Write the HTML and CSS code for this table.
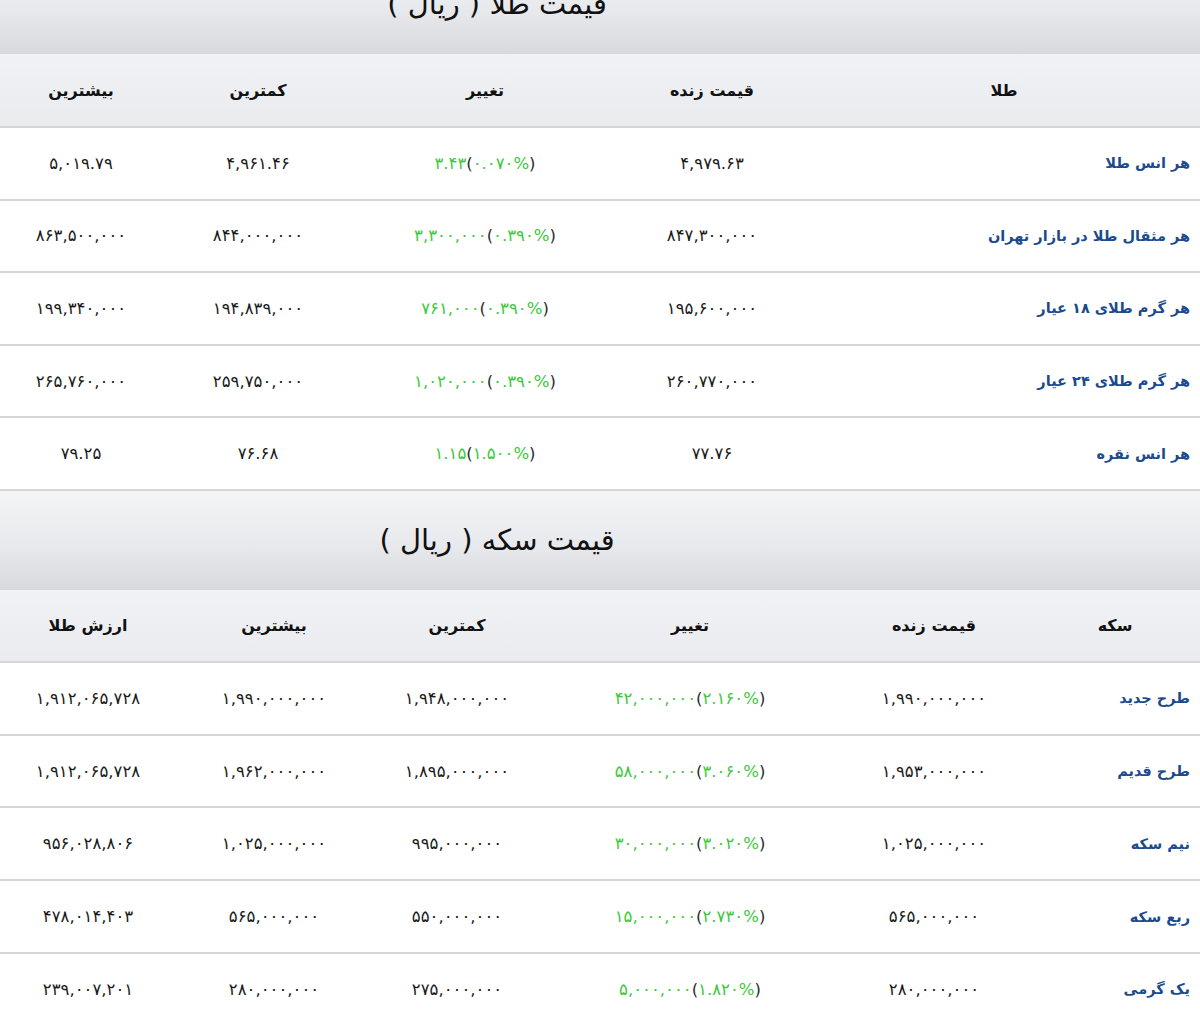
FILE: index.html
```html
<!DOCTYPE html>
<html lang="fa" dir="rtl">
<head>
<meta charset="utf-8">
<title>قیمت طلا و سکه</title>
<link rel="stylesheet" href="styles.css">
</head>
<body>
<section class="board gold">
  <div class="title-bar first"><h2 class="title">قیمت طلا ( ریال )</h2></div>
  <div class="row head">
    <div>طلا</div><div>قیمت زنده</div><div>تغییر</div><div>کمترین</div><div>بیشترین</div>
  </div>
  <div class="row">
    <div class="name">هر انس طلا</div><div>۴,۹۷۹.۶۳</div>
    <div><span class="chg" dir="ltr"><span class="up">۳.۴۳</span>(<span class="up">۰.۰۷۰%</span>)</span></div>
    <div>۴,۹۶۱.۴۶</div><div>۵,۰۱۹.۷۹</div>
  </div>
  <div class="row">
    <div class="name">هر مثقال طلا در بازار تهران</div><div>۸۴۷,۳۰۰,۰۰۰</div>
    <div><span class="chg" dir="ltr"><span class="up">۳,۳۰۰,۰۰۰</span>(<span class="up">۰.۳۹۰%</span>)</span></div>
    <div>۸۴۴,۰۰۰,۰۰۰</div><div>۸۶۳,۵۰۰,۰۰۰</div>
  </div>
  <div class="row">
    <div class="name">هر گرم طلای ۱۸ عیار</div><div>۱۹۵,۶۰۰,۰۰۰</div>
    <div><span class="chg" dir="ltr"><span class="up">۷۶۱,۰۰۰</span>(<span class="up">۰.۳۹۰%</span>)</span></div>
    <div>۱۹۴,۸۳۹,۰۰۰</div><div>۱۹۹,۳۴۰,۰۰۰</div>
  </div>
  <div class="row">
    <div class="name">هر گرم طلای ۲۴ عیار</div><div>۲۶۰,۷۷۰,۰۰۰</div>
    <div><span class="chg" dir="ltr"><span class="up">۱,۰۲۰,۰۰۰</span>(<span class="up">۰.۳۹۰%</span>)</span></div>
    <div>۲۵۹,۷۵۰,۰۰۰</div><div>۲۶۵,۷۶۰,۰۰۰</div>
  </div>
  <div class="row">
    <div class="name">هر انس نقره</div><div>۷۷.۷۶</div>
    <div><span class="chg" dir="ltr"><span class="up">۱.۱۵</span>(<span class="up">۱.۵۰۰%</span>)</span></div>
    <div>۷۶.۶۸</div><div>۷۹.۲۵</div>
  </div>
</section>

<section class="board coin">
  <div class="title-bar"><h2 class="title">قیمت سکه ( ریال )</h2></div>
  <div class="row head">
    <div>سکه</div><div>قیمت زنده</div><div>تغییر</div><div>کمترین</div><div>بیشترین</div><div>ارزش طلا</div>
  </div>
  <div class="row">
    <div class="name">طرح جدید</div><div>۱,۹۹۰,۰۰۰,۰۰۰</div>
    <div><span class="chg" dir="ltr"><span class="up">۴۲,۰۰۰,۰۰۰</span>(<span class="up">۲.۱۶۰%</span>)</span></div>
    <div>۱,۹۴۸,۰۰۰,۰۰۰</div><div>۱,۹۹۰,۰۰۰,۰۰۰</div><div>۱,۹۱۲,۰۶۵,۷۲۸</div>
  </div>
  <div class="row">
    <div class="name">طرح قدیم</div><div>۱,۹۵۳,۰۰۰,۰۰۰</div>
    <div><span class="chg" dir="ltr"><span class="up">۵۸,۰۰۰,۰۰۰</span>(<span class="up">۳.۰۶۰%</span>)</span></div>
    <div>۱,۸۹۵,۰۰۰,۰۰۰</div><div>۱,۹۶۲,۰۰۰,۰۰۰</div><div>۱,۹۱۲,۰۶۵,۷۲۸</div>
  </div>
  <div class="row">
    <div class="name">نیم سکه</div><div>۱,۰۲۵,۰۰۰,۰۰۰</div>
    <div><span class="chg" dir="ltr"><span class="up">۳۰,۰۰۰,۰۰۰</span>(<span class="up">۳.۰۲۰%</span>)</span></div>
    <div>۹۹۵,۰۰۰,۰۰۰</div><div>۱,۰۲۵,۰۰۰,۰۰۰</div><div>۹۵۶,۰۲۸,۸۰۶</div>
  </div>
  <div class="row">
    <div class="name">ربع سکه</div><div>۵۶۵,۰۰۰,۰۰۰</div>
    <div><span class="chg" dir="ltr"><span class="up">۱۵,۰۰۰,۰۰۰</span>(<span class="up">۲.۷۳۰%</span>)</span></div>
    <div>۵۵۰,۰۰۰,۰۰۰</div><div>۵۶۵,۰۰۰,۰۰۰</div><div>۴۷۸,۰۱۴,۴۰۳</div>
  </div>
  <div class="row">
    <div class="name">یک گرمی</div><div>۲۸۰,۰۰۰,۰۰۰</div>
    <div><span class="chg" dir="ltr"><span class="up">۵,۰۰۰,۰۰۰</span>(<span class="up">۱.۸۲۰%</span>)</span></div>
    <div>۲۷۵,۰۰۰,۰۰۰</div><div>۲۸۰,۰۰۰,۰۰۰</div><div>۲۳۹,۰۰۷,۲۰۱</div>
  </div>
</section>
</body>
</html>
```
FILE: styles.css
```css
html, body {
  margin: 0;
  padding: 0;
  background: #ffffff;
}
body {
  font-family: "DejaVu Sans", "Noto Sans", sans-serif;
  color: #222222;
  overflow: hidden;
}
.board {
  width: 1200px;
}
.title-bar {
  height: 99px;
  box-sizing: border-box;
  background: linear-gradient(to bottom, #f4f5f7 0%, #e8e9ec 55%, #d8d9dc 100%);
  display: flex;
  align-items: center;
  justify-content: center;
  padding-right: 206px;
}
.title-bar.first {
  margin-top: -45px;
}
.title {
  margin: 0;
  font-size: 29px;
  font-weight: normal;
  color: #111111;
  line-height: 1;
}
.row {
  display: grid;
  align-items: center;
  height: 72.6px;
  box-sizing: border-box;
  border-bottom: 2px solid #d6d6d6;
  font-size: 16.5px;
  text-align: center;
  color: #1a1a1a;
}
.gold .row {
  grid-template-columns: 392px 192px 262px 192px 162px;
}
.coin .row {
  grid-template-columns: 170px 192px 296px 170px 196px 176px;
  height: 72.75px;
}
.row.head {
  height: 74px;
  background: linear-gradient(to bottom, #f1f2f5 0%, #eaebef 100%);
  font-weight: bold;
  font-size: 16px;
  color: #111111;
}
.coin .row.head {
  height: 73px;
}
.name {
  text-align: right;
  padding-right: 10px;
  font-weight: bold;
  font-size: 14.5px;
  color: #1b4b8c;
}
.chg {
  color: #2a2a2a;
}
.up {
  color: #3cc83c;
}
```
